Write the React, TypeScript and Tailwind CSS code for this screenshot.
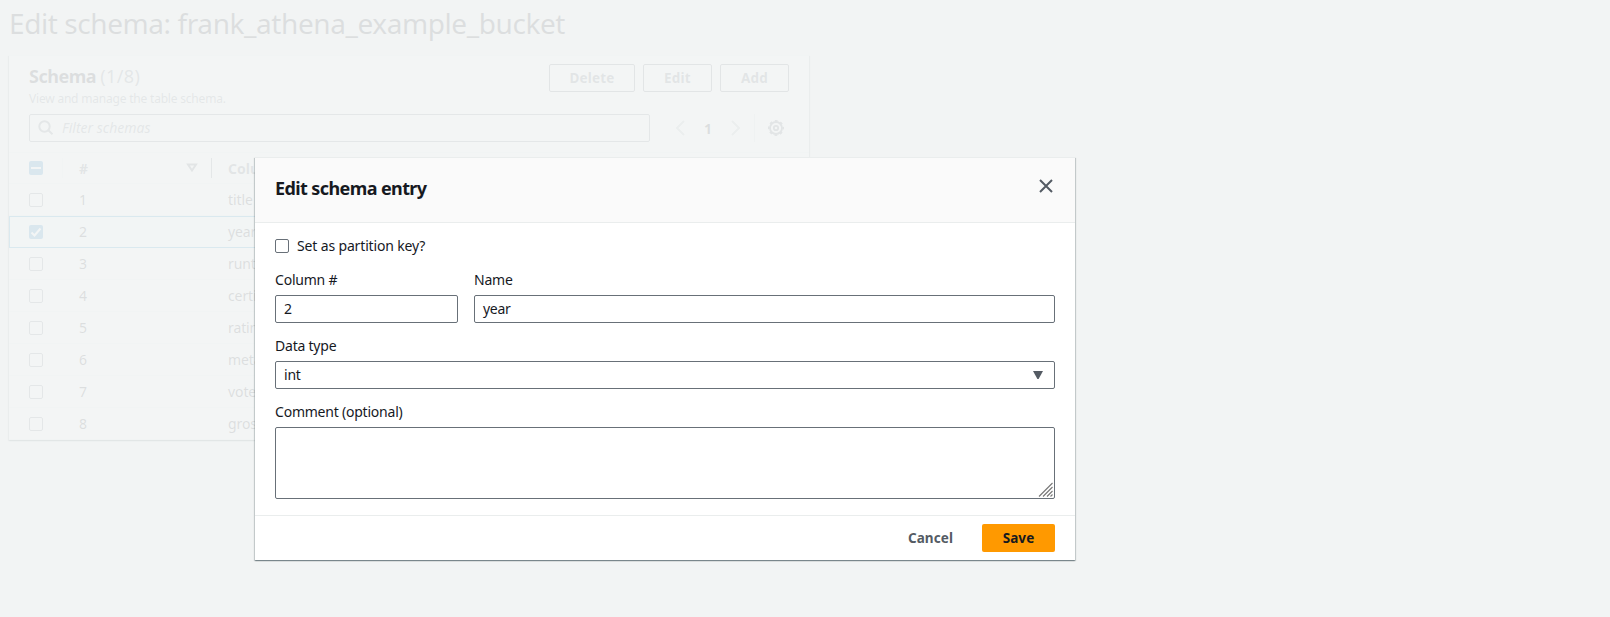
import type { ReactNode } from 'react';

const rows = [
  { n: 1, name: 'title' },
  { n: 2, name: 'year', selected: true },
  { n: 3, name: 'runtime' },
  { n: 4, name: 'certificate' },
  { n: 5, name: 'rating' },
  { n: 6, name: 'metascore' },
  { n: 7, name: 'votes' },
  { n: 8, name: 'gross' },
];

function Checkbox({ state = 'off' }: { state?: 'off' | 'on' | 'mixed' }) {
  if (state === 'off') {
    return <span className="block size-3.5 shrink-0 rounded-xs border border-[#687078] bg-white" />;
  }
  return (
    <span className="block size-3.5 shrink-0 rounded-xs bg-[#0073bb]">
      <svg viewBox="0 0 14 14" className="size-3.5" fill="none" stroke="#fff" strokeWidth="2">
        {state === 'on' ? <path d="M2.5 7.5 5.5 10.5 11.5 3.5" /> : <path d="M2 7H12" />}
      </svg>
    </span>
  );
}

function OutlineButton({ children, width }: { children: ReactNode; width: string }) {
  return (
    <button className={`${width} h-7 rounded-xs border border-[#545b64] bg-white pt-px text-[13.5px] leading-none font-bold tracking-[0.2px] text-[#545b64]`}>
      {children}
    </button>
  );
}

function SchemaPanel() {
  return (
    <section className="ml-[9px] mt-[13px] w-[800px] border-t border-[#eaeded] bg-white shadow-[0_1px_1px_0_rgba(0,28,36,0.3),1px_1px_1px_0_rgba(0,28,36,0.3),-1px_1px_1px_0_rgba(0,28,36,0.3)]">
      <div className="flex h-[58px] items-start justify-between pr-[20px] pl-5">
        <div className="pt-[9px]">
          <h2 className="text-[18px] leading-[22px] font-bold tracking-[-0.5px]">
            Schema <span className="font-normal tracking-[0.4px] text-[#687078]">(1/8)</span>
          </h2>
          <p className="pt-px text-[12px] leading-[22px] tracking-[-0.2px] text-[#687078]">View and manage the table schema.</p>
        </div>
        <div className="flex gap-2 pt-2">
          <OutlineButton width="w-[86px]">Delete</OutlineButton>
          <OutlineButton width="w-[69px]">Edit</OutlineButton>
          <OutlineButton width="w-[69px]">Add</OutlineButton>
        </div>
      </div>
      <div className="flex h-[38px] items-start pl-5">
        <div className="flex h-7 w-[621px] items-center gap-[8px] rounded-xs border border-[#687078] pl-2">
          <svg viewBox="0 0 16 16" className="size-4" fill="none" stroke="#687078" strokeWidth="2">
            <circle cx="6.5" cy="6.5" r="5.2" />
            <path d="m10.3 10.3 4.2 4" />
          </svg>
          <span className="text-[14px] leading-5 text-[#687078] italic">Filter schemas</span>
        </div>
        <div className="flex h-7 items-center pl-[25px]">
          <svg viewBox="0 0 10 16" className="h-4 w-2.5" fill="none" stroke="#aab7b8" strokeWidth="2">
            <path d="M9 1 2 8l7 7" />
          </svg>
          <span className="w-[46px] text-center text-[14px] font-bold">1</span>
          <svg viewBox="0 0 10 16" className="h-4 w-2.5" fill="none" stroke="#aab7b8" strokeWidth="2">
            <path d="m1 1 7 7-7 7" />
          </svg>
          <span className="ml-[13px] h-7 w-px bg-[#d5dbdb]" />
          <svg viewBox="0 0 16 16" className="ml-[13px] size-4" fill="none" stroke="#545b64">
            <circle cx="8" cy="8" r="2.2" strokeWidth="1.8" />
            <circle cx="8" cy="8" r="6" strokeWidth="1.8" />
            <circle cx="8" cy="8" r="7.2" strokeWidth="1.6" strokeDasharray="2.827 2.827" strokeDashoffset="1.4135" />
          </svg>
        </div>
      </div>
      <div className="flex h-8 items-center border-y border-[#eaeded] text-[14px] font-bold text-[#545b64]">
        <div className="flex h-5 w-[54px] items-center border-r border-[#eaeded] pl-5">
          <Checkbox state="mixed" />
        </div>
        <div className="flex h-5 w-[149px] items-center justify-between border-r border-[#687078] pr-[13px] pl-4">
          <span>#</span>
          <svg viewBox="0 0 12 10" className="h-2.5 w-3" fill="none" stroke="#545b64" strokeWidth="2">
            <path d="M2 1.500h8L6 7.500z" />
          </svg>
        </div>
        <span className="pl-4">Column name</span>
      </div>
      {rows.map((row) => (
        <div
          key={row.n}
          className={
            row.selected
              ? 'flex h-8 items-center border border-[#0084c4] bg-[#f1faff] pb-px text-[14px]'
              : 'flex h-8 items-center border-x border-b border-x-transparent border-b-[#eaeded] text-[14px]'
          }
        >
          <div className="w-[69px] pl-[19px]">
            <Checkbox state={row.selected ? 'on' : 'off'} />
          </div>
          <span className="w-[149px]">{row.n}</span>
          <span className="tracking-[-0.1px]">{row.name}</span>
        </div>
      ))}
    </section>
  );
}

function Field({ label, children }: { label: string; children: ReactNode }) {
  return (
    <div className="flex flex-col gap-1">
      <label className="text-[14px] leading-[22px] tracking-[-0.22px]">{label}</label>
      {children}
    </div>
  );
}

function EditDialog() {
  return (
    <div
      role="dialog"
      className="absolute top-[157px] left-[255px] w-[820px] bg-white shadow-[0_1px_1px_0_rgba(0,28,36,0.3),1px_1px_1px_0_rgba(0,28,36,0.15),-1px_1px_1px_0_rgba(0,28,36,0.15)]"
    >
      <header className="flex h-[66px] items-start justify-between border-y border-[#eaeded] bg-[#fafafa] pr-[22px] pl-5">
        <h2 className="pt-[19px] text-[18px] leading-[22px] font-bold tracking-[-0.6px]">Edit schema entry</h2>
        <svg viewBox="0 0 14 14" className="mt-[21px] size-3.5" fill="none" stroke="#545b64" strokeWidth="2">
          <path d="m1 1 12 12M13 1 1 13" />
        </svg>
      </header>
      <div className="flex flex-col gap-3 px-5 pt-3 pb-4">
        <div className="flex h-[22px] items-center gap-2">
          <Checkbox />
          <span className="text-[14px] leading-[22px] tracking-[-0.15px]">Set as partition key?</span>
        </div>
        <div className="grid grid-cols-[183px_581px] gap-4">
          <Field label="Column #">
            <div className="flex h-7 items-center rounded-xs border border-[#687078] px-2 pb-px text-[14px]">2</div>
          </Field>
          <Field label="Name">
            <div className="flex h-7 items-center rounded-xs border border-[#687078] px-2 pb-px text-[14px] tracking-[-0.3px]">year</div>
          </Field>
        </div>
        <Field label="Data type">
          <div className="flex h-7 items-center justify-between rounded-xs border border-[#687078] pr-[11px] pl-2 text-[14px] tracking-[-0.2px]">
            <span className="pb-px">int</span>
            <svg viewBox="0 0 10 8" className="h-2 w-2.5" fill="#545b64">
              <path d="M0 0h10L5.600 8H4.400z" />
            </svg>
          </div>
        </Field>
        <Field label="Comment (optional)">
          <div className="flex h-[72px] items-end justify-end rounded-xs border border-[#687078] pr-px pb-px">
            <svg viewBox="0 0 15 15" className="size-[15px]" stroke="#777" strokeWidth="1.100">
              <path d="M1 14.500 14.500 1M5 14.500 14.500 5M9 14.500 14.500 9M12.500 14.500l2-2" />
            </svg>
          </div>
        </Field>
      </div>
      <footer className="flex h-[45px] items-center justify-end border-t border-[#eaeded] pr-5">
        <button className="h-7 w-[85px] text-[13.5px] font-bold tracking-[0.1px] text-[#545b64]">Cancel</button>
        <button className="ml-[9px] h-7 w-[73px] rounded-xs bg-[#ff9900] text-[13.5px] font-bold tracking-[0.1px] text-[#16191f]">
          Save
        </button>
      </footer>
    </div>
  );
}

export default function App() {
  return (
    <div className="relative h-[617px] w-full overflow-hidden bg-[#f2f3f3] font-['Noto_Sans','Open_Sans',sans-serif] text-[#16191f]">
      <h1 className="pt-[5px] pb-px pl-[9px] text-[28px] leading-[36px] tracking-[-0.42px] whitespace-nowrap">
        Edit schema: frank_athena_example_bucket
      </h1>
      <SchemaPanel />
      <div className="absolute inset-0 bg-[#f2f4f4]/90" />
      <EditDialog />
    </div>
  );
}
